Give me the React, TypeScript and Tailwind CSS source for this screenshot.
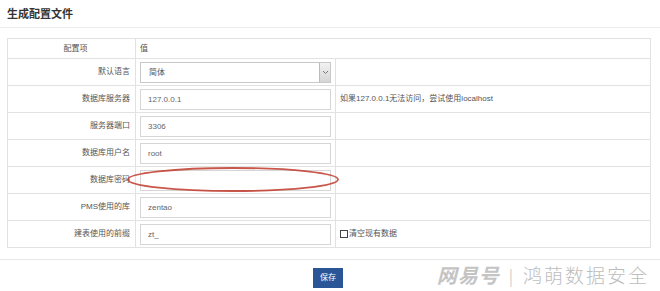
import React from "react";

const rows = [
  { label: "默认语言", kind: "select", value: "简体" },
  { label: "数据库服务器", kind: "input", value: "127.0.0.1", hint: "如果127.0.0.1无法访问，尝试使用localhost" },
  { label: "服务器端口", kind: "input", value: "3306" },
  { label: "数据库用户名", kind: "input", value: "root" },
  { label: "数据库密码", kind: "input", value: "" },
  { label: "PMS使用的库", kind: "input", value: "zentao" },
  { label: "建表使用的前缀", kind: "input", value: "zt_", check: "清空现有数据" },
];

export default function App() {
  return (
    <div
      className="relative w-[660px] h-[291px] bg-white text-[#555] overflow-hidden"
      style={{ fontFamily: '"Liberation Sans", "Noto Sans CJK SC", sans-serif' }}
    >
      <div className="h-[28px] pl-[7px] pt-[6px] text-[11px] font-bold text-[#333] border-b border-[#ececec]">
        生成配置文件
      </div>

      <div className="ml-[7px] mr-[9px] mt-[10px]">
        <table className="w-full border-collapse text-[8px]">
          <tbody>
            <tr className="h-[20px]">
              <td className="w-[128px] border border-[#e2e2e2] text-center pl-[8px]">配置项</td>
              <td className="border border-[#e2e2e2] pl-[4px]" colSpan={2}>值</td>
            </tr>
            {rows.map((r) => (
              <tr key={r.label} className="h-[27px]">
                <td className="border border-[#e2e2e2] text-right pr-[5px]">{r.label}</td>
                <td className="w-[199px] border border-[#e2e2e2] pl-[4px] pr-[4px]">
                  {r.kind === "select" ? (
                    <div className="flex h-[21px] w-[191px] items-stretch border border-[#c8c8c8] bg-white">
                      <span className="flex-1 pl-[8px] leading-[19px]">{r.value}</span>
                      <span className="w-[11px] border-l border-[#bbb] bg-gradient-to-b from-[#f2f2f2] to-[#d6d6d6] flex items-center justify-center">
                        <svg width="7" height="5" viewBox="0 0 7 5">
                          <path d="M1 1 L3.5 3.5 L6 1" stroke="#777" strokeWidth="1" fill="none" />
                        </svg>
                      </span>
                    </div>
                  ) : (
                    <div className="h-[21px] w-[191px] border border-[#d6d6d6] pl-[7px] leading-[19px] text-[#666]">
                      {r.value}
                    </div>
                  )}
                </td>
                <td className="border border-[#e2e2e2] pl-[4px]">
                  {r.hint && <span className="text-[#555]">{r.hint}</span>}
                  {r.check && (
                    <span className="flex items-center gap-[1px]">
                      <span className="inline-block w-[8px] h-[8px] border border-[#444] bg-white" />
                      <span>{r.check}</span>
                    </span>
                  )}
                </td>
              </tr>
            ))}
          </tbody>
        </table>
      </div>

      <div className="mt-[11px] border-t border-[#e8e8e8] flex justify-center pt-[8px]">
        <button className="ml-[-4px] h-[20px] w-[30px] bg-[#2a5597] text-white text-[8px] leading-[20px]">
          保存
        </button>
      </div>

      {/* red annotation ellipse */}
      <svg className="absolute left-[126px] top-[166px]" width="214" height="27" viewBox="0 0 214 27">
        <ellipse cx="107" cy="13.5" rx="105" ry="11.5" fill="none" stroke="#c0392b" strokeWidth="1.8" opacity="0.85" />
      </svg>

      {/* watermark */}
      <div
        className="absolute right-[11px] top-[260px] flex items-center text-[20px] text-[#bdbdbd] tracking-[1px]"
        style={{ fontFamily: '"Noto Sans CJK SC", sans-serif' }}
      >
        <span className="font-bold italic text-[#c4c4c4]">网易号</span>
        <span className="mx-[9px] text-[16px] text-[#cfcfcf]">|</span>
        <span className="text-[19px] font-light tracking-[2px]" style={{ fontFamily: '"Noto Sans CJK SC", serif' }}>鸿萌数据安全</span>
      </div>
    </div>
  );
}
